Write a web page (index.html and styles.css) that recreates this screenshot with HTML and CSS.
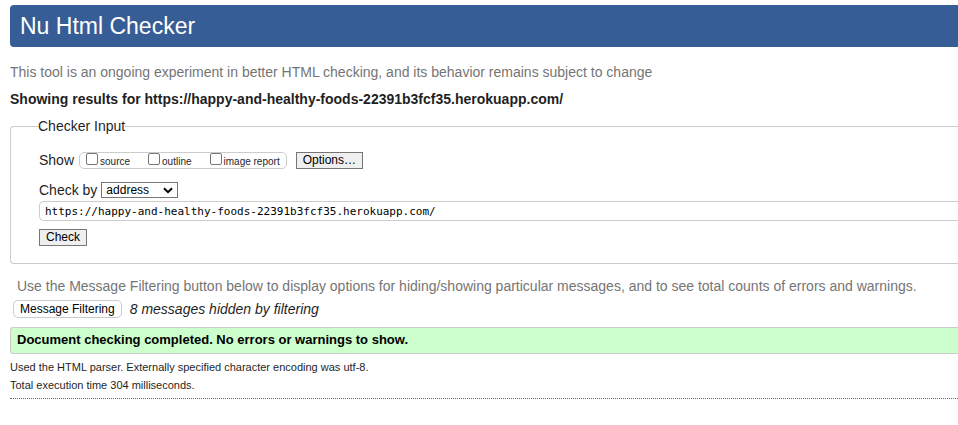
FILE: index.html
```
<!DOCTYPE html>
<html lang="en">
<head>
<meta charset="utf-8">
<title>Nu Html Checker</title>
<link rel="stylesheet" href="styles.css">
</head>
<body>
<h1>Nu Html Checker</h1>
<p class="intro">This tool is an ongoing experiment in better HTML checking, and its behavior remains subject to change</p>
<h2>Showing results for https://happy-and-healthy-foods-22391b3fcf35.herokuapp.com/</h2>
<form>
  <fieldset class="inputs">
    <legend>Checker Input</legend>
    <div class="row show">
      <span>Show</span>
      <div class="checks">
        <label><input type="checkbox">source</label>
        <label><input type="checkbox">outline</label>
        <label><input type="checkbox">image report</label>
      </div>
      <button class="plain" type="button">Options…</button>
    </div>
    <div class="row">
      <label for="method">Check by</label>
      <div class="picker">
        <select id="method"><option>address</option></select>
        <svg class="chevron" viewBox="0 0 10 7" aria-hidden="true"><path d="M1 1.2L5 5.2L9 1.2"/></svg>
      </div>
    </div>
    <input class="address" type="text" aria-label="Address" value="https://happy-and-healthy-foods-22391b3fcf35.herokuapp.com/">
    <button class="plain" type="button">Check</button>
  </fieldset>
</form>
<p class="hint">Use the Message Filtering button below to display options for hiding/showing particular messages, and to see total counts of errors and warnings.</p>
<div class="filter">
  <button type="button">Message Filtering</button>
  <em>8 messages hidden by filtering</em>
</div>
<p class="success">Document checking completed. No errors or warnings to show.</p>
<div class="details">
  <p>Used the HTML parser. Externally specified character encoding was utf-8.</p>
  <p>Total execution time 304 milliseconds.</p>
</div>
</body>
</html>
```
FILE: styles.css
```
* { box-sizing: border-box; }
body {
  margin: 5px 0 0 10px;
  background: #fff;
  color: #1f1f1f;
  font: 14px/18px "Liberation Sans", Arial, sans-serif;
}
h1, h2, p { margin: 0; }
h1 {
  padding: 6px 10px;
  border-radius: 4px 0 0 4px;
  background: #365d95;
  color: #fff;
  font-size: 23px;
  font-weight: 400;
  line-height: 30px;
}
.intro { margin-top: 16px; color: #757575; }
h2 { margin-top: 9px; font-size: 14px; line-height: 18px; }
button, select, input { margin: 0; color: #000; font: 12px/15px "Liberation Sans", Arial, sans-serif; }
.inputs {
  min-width: 0;
  margin: 9px 0 0;
  padding: 16px 0 17px 28px;
  border: 1px solid #ccc;
  border-right: 0;
  border-radius: 4px 0 0 4px;
}
legend { margin-left: -1px; padding: 0; }
.row { display: flex; align-items: center; gap: 4px; margin-bottom: 2px; }
.show { gap: 5px; margin-bottom: 12px; }
.checks {
  display: flex;
  gap: 18px;
  height: 17px;
  margin-right: 4px;
  padding: 0 6px;
  border: 1px solid #ccc;
  border-radius: 5px;
}
.checks label { display: flex; gap: 2px; font-size: 10px; line-height: 17px; }
.checks input {
  appearance: none;
  width: 12px;
  height: 12px;
  border: 1px solid #767676;
  border-radius: 2px;
  background: #fff;
}
.plain {
  display: block;
  height: 17px;
  padding: 0 6px;
  border: 1px solid #767676;
  border-radius: 0;
  background: #efefef;
}
.picker { display: grid; align-items: center; }
.picker > * { grid-area: 1 / 1; }
select {
  appearance: none;
  width: 77px;
  height: 16px;
  padding: 0 4px;
  border: 1px solid #767676;
  border-radius: 0;
  background: #fff;
  line-height: 14px;
}
.chevron {
  justify-self: end;
  width: 10px;
  height: 7px;
  margin-right: 5px;
  fill: none;
  stroke: #000;
  stroke-width: 2;
  pointer-events: none;
}
.address {
  display: block;
  width: 100%;
  height: 20px;
  margin-bottom: 8px;
  padding: 0 5px;
  border: 1px solid #ccc;
  border-right: 0;
  border-radius: 5px 0 0 5px;
  font: 11px/18px "DejaVu Sans Mono", monospace;
}
.hint { margin: 13px 0 0 7px; color: #757575; }
.filter { display: flex; align-items: center; gap: 8px; margin: 5px 0 0 3px; }
.filter button {
  height: 18px;
  padding: 0 6px;
  border: 1px solid #ccc;
  border-radius: 5px;
  background: #fff;
}
.success {
  margin-top: 9px;
  padding: 3px 6px 5px;
  border: 1px solid #ccc;
  border-right: 0;
  border-radius: 3px 0 0 3px;
  background: #cfc;
  color: #000;
  font-size: 13px;
  font-weight: 700;
  line-height: 17px;
}
.details {
  padding: 4px 0;
  border-bottom: 1px dotted #666;
  font-size: 11px;
}
```
